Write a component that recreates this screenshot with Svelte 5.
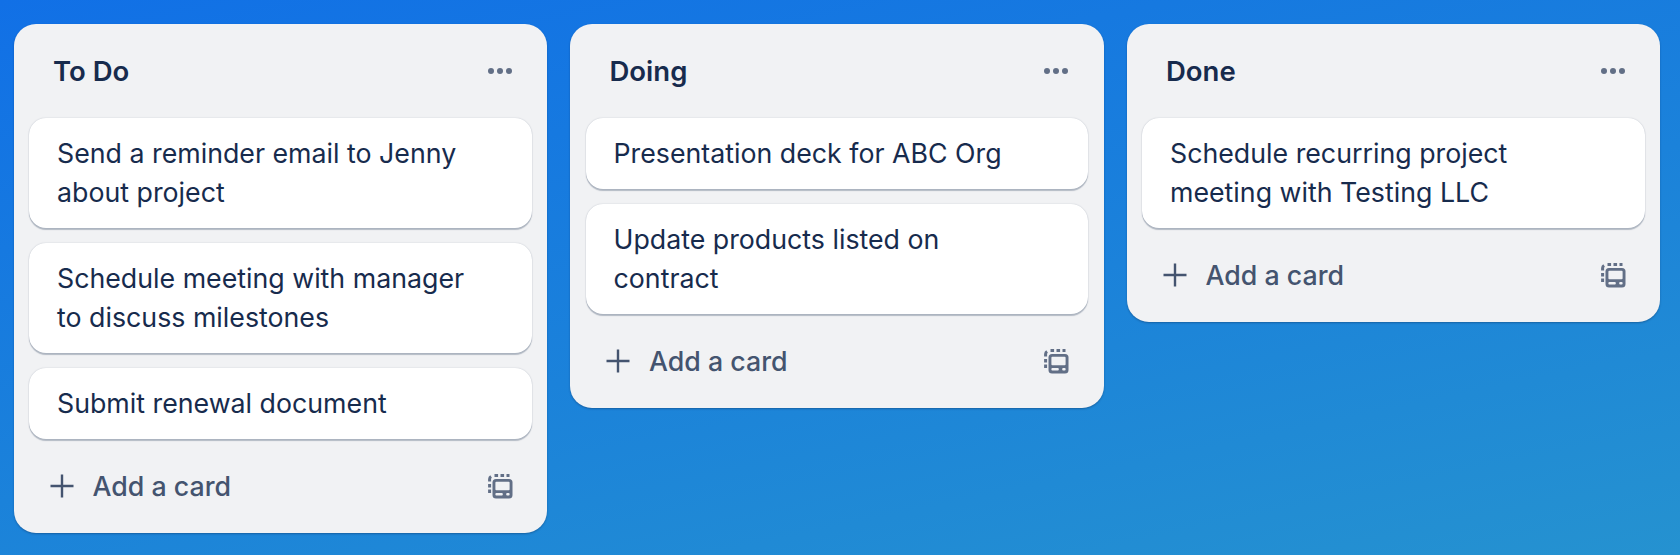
<script lang="ts">
	const lists = [
		{
			title: 'To Do',
			cards: [
				['Send a reminder email to Jenny', 'about project'],
				['Schedule meeting with manager', 'to discuss milestones'],
				['Submit renewal document']
			]
		},
		{
			title: 'Doing',
			cards: [['Presentation deck for ABC Org'], ['Update products listed on', 'contract']]
		},
		{
			title: 'Done',
			cards: [['Schedule recurring project', 'meeting with Testing LLC']]
		}
	];
</script>

<main class="board">
	{#each lists as list}
		<section class="list">
			<header class="list-header">
				<h2>{list.title}</h2>
				<button class="more" aria-label="List actions">
					<svg width="26" height="8" viewBox="0 0 26 8" fill="currentColor" aria-hidden="true">
						<circle cx="4" cy="4" r="3" />
						<circle cx="13" cy="4" r="3" />
						<circle cx="22" cy="4" r="3" />
					</svg>
				</button>
			</header>

			<ul class="cards">
				{#each list.cards as lines}
					<li class="card">
						{#each lines as line}
							<span>{line}</span>
						{/each}
					</li>
				{/each}
			</ul>

			<footer class="list-footer">
				<button class="add">
					<svg width="26" height="26" viewBox="0 0 26 26" fill="none" stroke="currentColor" stroke-width="2.4" aria-hidden="true">
						<path d="M13 1.5v23M1.5 13h23" />
					</svg>
					Add a card
				</button>
				<button class="template" aria-label="Create from template">
					<svg width="25" height="25" viewBox="0 0 25 25" fill="none" aria-hidden="true">
						<path d="M1.6 7.5V5a3.2 3.2 0 0 1 1.5-2.6M6.5 1.6h3.6M12.5 1.6h3.6M18.5 1.6h3M1.6 10v3.4M1.6 15.6v3.4" stroke="currentColor" stroke-width="3" />
						<rect x="4.5" y="5" width="20" height="19.5" rx="3.5" fill="currentColor" />
						<rect x="7.4" y="7.8" width="14.2" height="8.4" rx="1" fill="#f1f2f4" />
						<rect x="7.4" y="19" width="7.4" height="2.6" rx="1" fill="#f1f2f4" />
						<rect x="18.2" y="19" width="3.4" height="2.6" rx="1" fill="#f1f2f4" />
					</svg>
				</button>
			</footer>
		</section>
	{/each}
</main>

<style>
	:global(body) {
		margin: 0;
		background: #1a7fdc;
	}

	.board {
		display: flex;
		align-items: flex-start;
		gap: 23px;
		box-sizing: border-box;
		width: 1680px;
		height: 555px;
		padding: 24px 19px 0 13.5px;
		overflow: hidden;
		background: linear-gradient(168deg, #1170e6 0%, #1b82da 55%, #2592d0 100%);
		font-family: Inter, 'Liberation Sans', sans-serif;
	}

	.list {
		flex: 0 0 533.5px;
		box-sizing: border-box;
		padding: 0 15.5px;
		background: #f1f2f4;
		border-radius: 22px;
		box-shadow: 0 1px 2px rgba(9, 30, 66, 0.35);
	}

	.list-header {
		display: flex;
		align-items: center;
		justify-content: space-between;
		height: 94px;
		padding: 0 19px 0 24px;
	}

	h2 {
		margin: 0;
		font-size: 27.5px;
		font-weight: 600;
		color: #172b4d;
	}

	button {
		display: flex;
		align-items: center;
		padding: 0;
		border: 0;
		background: none;
		font: inherit;
		cursor: pointer;
	}

	.more {
		color: #626f86;
	}

	.cards {
		display: flex;
		flex-direction: column;
		gap: 15px;
		margin: 0;
		padding: 0;
		list-style: none;
	}

	.card {
		display: flex;
		flex-direction: column;
		padding: 16px 28px;
		background: #fff;
		border-radius: 17px;
		box-shadow: 0 0 1.5px rgba(9, 30, 66, 0.22), 0 1.5px 1px rgba(9, 30, 66, 0.26);
		font-size: 26.75px;
		line-height: 39px;
		color: #172b4d;
	}

	.list-footer {
		display: flex;
		align-items: center;
		justify-content: space-between;
		height: 94px;
		padding: 0 19px 0 19.5px;
	}

	.add {
		gap: 18px;
		font-size: 26.75px;
		font-weight: 500;
		color: #44546f;
	}

	.template {
		color: #626f86;
	}
</style>
